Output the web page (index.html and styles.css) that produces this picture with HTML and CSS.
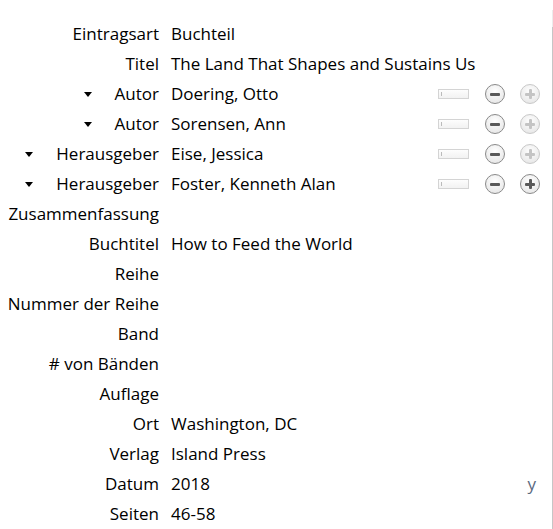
FILE: index.html
```html
<!DOCTYPE html>
<html>
<head>
<meta charset="utf-8">
<link rel="stylesheet" href="styles.css">
</head>
<body>
<div class="pane">
  <div class="rows">
    <div class="row"><div class="label">Eintragsart</div><div class="value">Buchteil</div></div>
    <div class="row"><div class="label">Titel</div><div class="value">The Land That Shapes and Sustains Us</div></div>
    <div class="row creator"><div class="label"><span class="tri"></span><span class="ctype">Autor</span></div><div class="value"><span class="name">Doering, Otto</span><span class="tools"><span class="switch"></span><span class="btn minus"></span><span class="btn plus dim"></span></span></div></div>
    <div class="row creator"><div class="label"><span class="tri"></span><span class="ctype">Autor</span></div><div class="value"><span class="name">Sorensen, Ann</span><span class="tools"><span class="switch"></span><span class="btn minus"></span><span class="btn plus dim"></span></span></div></div>
    <div class="row creator"><div class="label"><span class="tri"></span><span class="ctype">Herausgeber</span></div><div class="value"><span class="name">Eise, Jessica</span><span class="tools"><span class="switch"></span><span class="btn minus"></span><span class="btn plus dim"></span></span></div></div>
    <div class="row creator"><div class="label"><span class="tri"></span><span class="ctype">Herausgeber</span></div><div class="value"><span class="name">Foster, Kenneth Alan</span><span class="tools"><span class="switch"></span><span class="btn minus"></span><span class="btn plus"></span></span></div></div>
    <div class="row"><div class="label">Zusammenfassung</div><div class="value"></div></div>
    <div class="row"><div class="label">Buchtitel</div><div class="value">How to Feed the World</div></div>
    <div class="row"><div class="label">Reihe</div><div class="value"></div></div>
    <div class="row"><div class="label">Nummer der Reihe</div><div class="value"></div></div>
    <div class="row"><div class="label">Band</div><div class="value"></div></div>
    <div class="row"><div class="label"># von Bänden</div><div class="value"></div></div>
    <div class="row"><div class="label">Auflage</div><div class="value"></div></div>
    <div class="row"><div class="label">Ort</div><div class="value">Washington, DC</div></div>
    <div class="row"><div class="label">Verlag</div><div class="value">Island Press</div></div>
    <div class="row"><div class="label">Datum</div><div class="value"><span class="name">2018</span><span class="ymd">y</span></div></div>
    <div class="row"><div class="label">Seiten</div><div class="value">46-58</div></div>
  </div>
  <div class="edge"></div>
</div>
</body>
</html>
```
FILE: styles.css
```css
html, body {
  margin: 0;
  padding: 0;
  background: #fff;
}
body {
  font-family: "Open Sans", "Noto Sans", sans-serif;
  font-size: 17px;
  color: #000;
}
.pane {
  display: flex;
  width: 553px;
  height: 529px;
  overflow: hidden;
}
.rows {
  flex: 1;
  padding-top: 19px;
  display: flex;
  flex-direction: column;
}
.row {
  display: grid;
  grid-template-columns: 159px 1fr;
  column-gap: 12px;
  height: 30px;
  align-items: center;
  line-height: 30px;
}
.label {
  text-align: right;
  white-space: nowrap;
  display: flex;
  justify-content: flex-end;
  align-items: center;
}
.value {
  display: flex;
  align-items: center;
  white-space: nowrap;
}
.name {
  flex: 1;
}
.creator .label {
  justify-content: space-between;
}
.tri {
  width: 0;
  height: 0;
  border-left: 4.5px solid transparent;
  border-right: 4.5px solid transparent;
  border-top: 5px solid #000;
  margin-left: 84px;
}
.creator:nth-child(n+5) .tri {
  margin-left: 25px;
}
.tools {
  display: flex;
  align-items: center;
  margin-right: 12px;
}
.switch {
  width: 29px;
  height: 8px;
  border: 1px solid #d4d4d4;
  background: linear-gradient(#fdfdfd, #f2f2f2);
  position: relative;
  margin-right: 16px;
}
.switch::before {
  content: "";
  position: absolute;
  left: 2px;
  top: 2px;
  width: 1px;
  height: 4px;
  background: #bbb;
}
.btn {
  width: 18px;
  height: 18px;
  border-radius: 50%;
  border: 1px solid #8a8a8a;
  background: radial-gradient(circle at 50% 35%, #fff, #e2e2e2);
  position: relative;
}
.btn::before, .btn::after {
  content: "";
  position: absolute;
  background: #5a5a5a;
  border-radius: 1px;
}
.btn::before {
  left: 4px;
  top: 7.5px;
  width: 10px;
  height: 3px;
}
.plus {
  margin-left: 15px;
}
.plus::after {
  left: 7.5px;
  top: 4px;
  width: 3px;
  height: 10px;
}
.plus.dim {
  border-color: #c8c8c8;
}
.plus.dim::before, .plus.dim::after {
  background: #c4c4c4;
}
.ymd {
  color: #5a6a80;
  margin-right: 16px;
}
.edge {
  width: 1px;
  margin-top: 10px;
  background: linear-gradient(#ececec 0, #ececec 17px, #c6c6c6 17px);
}
```
